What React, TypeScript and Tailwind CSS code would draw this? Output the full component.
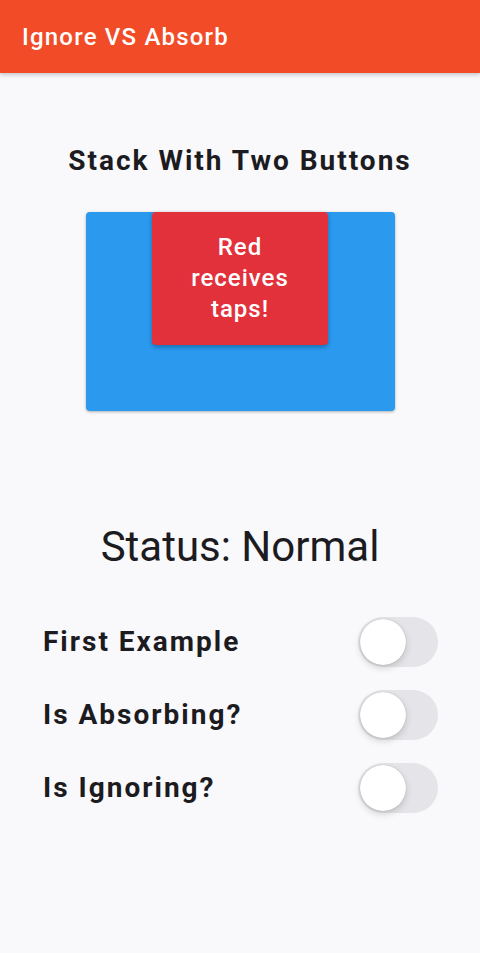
import React from "react";

function Toggle() {
  return (
    <div className="w-[80px] h-[50px] rounded-full bg-[#e5e4e8] p-[2px] flex items-center">
      <div className="w-[46px] h-[46px] rounded-full bg-white shadow-[0_3px_7px_rgba(0,0,0,0.16),0_0_1px_rgba(0,0,0,0.3)]" />
    </div>
  );
}

export default function App() {
  const rows = ["First Example", "Is Absorbing?", "Is Ignoring?"];
  return (
    <div className="w-[480px] h-[953px] bg-[#f9f8fb] flex flex-col" style={{ fontFamily: "Roboto, 'Noto Sans', sans-serif" }}>
      <div className="h-[73px] bg-[#f24b27] flex items-center px-[22px] shadow-[0_2px_4px_rgba(0,0,0,0.2)] relative z-10">
        <span className="text-white text-[24px] font-medium tracking-[1.2px]">Ignore VS Absorb</span>
      </div>
      <div className="flex flex-col items-center">
        <h1 className="mt-[68px] text-[28px] font-bold text-[#1c1b1f] leading-[40px] tracking-[2px]">Stack With Two Buttons</h1>
        <div className="mt-[31px] w-[309px] h-[199px] bg-[#2a99ee] rounded-[4px] shadow-[0_1px_3px_rgba(0,0,0,0.3)] flex justify-center">
          <div className="w-[176px] h-[133px] bg-[#e3313b] rounded-[4px] shadow-[0_2px_4px_rgba(0,0,0,0.3)] flex items-center justify-center text-center text-white text-[24px] font-medium leading-[31px] tracking-[1px] px-5">
            Red receives taps!
          </div>
        </div>
        <div className="mt-[108px] text-[42px] text-[#1c1b1f] leading-[56px]">Status: Normal</div>
      </div>
      <div className="mt-[42px] flex flex-col gap-[23px] pl-[43px] pr-[42px]">
        {rows.map((r) => (
          <div key={r} className="flex items-center justify-between h-[50px]">
            <span className="text-[28px] font-bold text-[#1c1b1f] tracking-[2px]">{r}</span>
            <Toggle />
          </div>
        ))}
      </div>
    </div>
  );
}
